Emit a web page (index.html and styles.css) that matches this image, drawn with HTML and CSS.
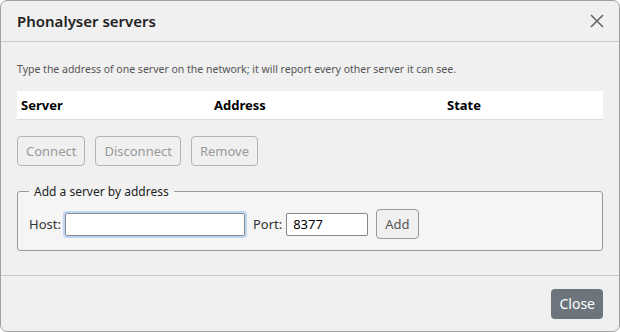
FILE: index.html
```html
<!DOCTYPE html>
<html>
<head>
  <title>Phonalyser servers</title>
  <link rel="stylesheet" href="styles.css">
</head>
<body>
  <div class="dialog">
    <div class="dialog-header">
      <h1>Phonalyser servers</h1>
      <button class="close-x" type="button" aria-label="Close">
        <svg width="14" height="14" viewBox="0 0 14 14">
          <path d="M1 1 L13 13 M13 1 L1 13" stroke="#666" stroke-width="1.6" fill="none"/>
        </svg>
      </button>
    </div>

    <div class="dialog-body">
      <p class="hint">Type the address of one server on the network; it will report every other server it can see.</p>

      <table class="servers">
        <thead>
          <tr>
            <th class="col-server">Server</th>
            <th class="col-address">Address</th>
            <th>State</th>
          </tr>
        </thead>
      </table>

      <div class="actions">
        <button class="btn" disabled>Connect</button>
        <button class="btn" disabled>Disconnect</button>
        <button class="btn" disabled>Remove</button>
      </div>

      <fieldset class="add-server">
        <legend>Add a server by address</legend>
        <label for="host">Host:</label>
        <input type="text" id="host" class="host-input">
        <label for="port">Port:</label>
        <input type="text" id="port" class="port-input" value="8377">
        <button class="btn btn-add" type="button">Add</button>
      </fieldset>
    </div>

    <div class="dialog-footer">
      <button class="btn-close" type="button">Close</button>
    </div>
  </div>
</body>
</html>
```

FILE: styles.css
```css
html, body {
  margin: 0;
  height: 100%;
  background-color: #fff;
}

body {
  font-family: "Noto Sans", "Open Sans", sans-serif;
  color: #222;
}

.dialog {
  box-sizing: border-box;
  height: 332px;
  background-color: #f0f0f0;
  border: 1px solid #a0a0a0;
  border-radius: 7px;
  display: flex;
  flex-direction: column;
}

.dialog-header {
  height: 40px;
  border-bottom: 1px solid #c8c8c8;
  display: flex;
  align-items: center;
  justify-content: space-between;
  padding: 0 15px 0 16px;
}

.dialog-header h1 {
  margin: 0;
  font-size: 15px;
  font-weight: 600;
  color: #222;
}

.close-x {
  background: none;
  border: none;
  padding: 0;
  width: 14px;
  height: 14px;
  display: flex;
}

.dialog-body {
  flex: 1;
  padding: 0 16px;
}

.hint {
  margin: 20px 0 14px;
  font-size: 10.5px;
  color: #555;
  line-height: 15px;
}

.servers {
  width: 100%;
  border-collapse: collapse;
  background-color: #fff;
  border-bottom: 1px solid #dcdcdc;
}

.servers th {
  text-align: left;
  font-size: 13px;
  font-weight: bold;
  color: #000;
  height: 28px;
  padding: 0 4px;
}

.col-server {
  width: 185px;
}

.col-address {
  width: 225px;
}

.actions {
  display: flex;
  gap: 10px;
  margin-top: 16px;
}

.btn {
  font-family: inherit;
  font-size: 13px;
  height: 30px;
  padding: 0 8px;
  background-color: #f0f0f0;
  border: 1px solid #999;
  border-radius: 4px;
  color: #555;
}

.btn:disabled {
  border-color: #b4b4b4;
  color: #999;
}

.add-server {
  margin: 17px 0 0;
  padding: 9px 10px 11px 11px;
  border: 1px solid #999;
  border-radius: 3px;
  background-color: #f5f5f5;
  display: flex;
  align-items: center;
}

.add-server legend {
  font-size: 12px;
  padding: 0 5px;
  margin-left: 0;
  color: #222;
}

.add-server label {
  font-size: 13px;
  color: #333;
  margin-right: 4px;
}

.add-server input {
  box-sizing: border-box;
  height: 23px;
  border: 1px solid #888;
  border-radius: 2px;
  font-family: inherit;
  font-size: 13px;
  padding: 0 6px;
  background-color: #fff;
}

.host-input {
  width: 180px;
  margin-right: 8px;
  outline: 2px solid #bcd6f5;
  outline-offset: 0;
}

.port-input {
  width: 82px;
  margin-right: 8px;
}

.btn-add {
  height: 30px;
  padding: 0 8px;
}

.dialog-footer {
  height: 55px;
  border-top: 1px solid #c8c8c8;
  display: flex;
  align-items: center;
  justify-content: flex-end;
  padding: 0 16px;
}

.btn-close {
  font-family: inherit;
  font-size: 14px;
  height: 30px;
  padding: 0 8px;
  background-color: #6c757d;
  color: #fff;
  border: none;
  border-radius: 4px;
}
```
